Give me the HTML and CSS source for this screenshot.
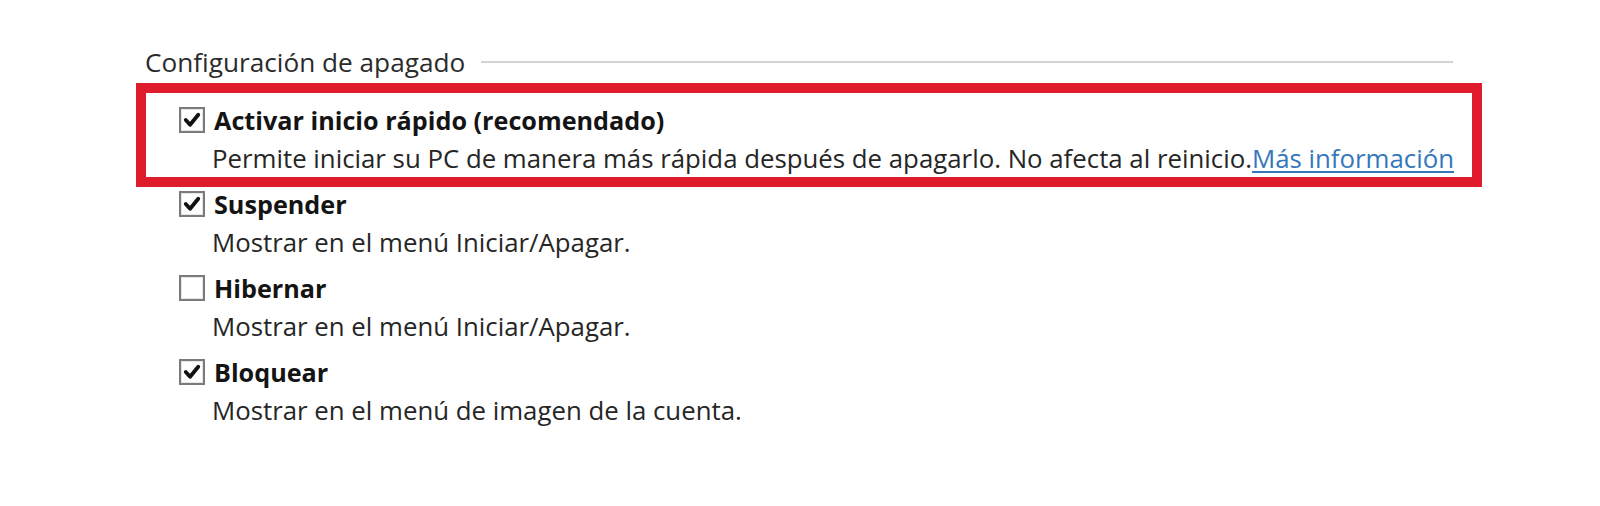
FILE: index.html
```html
<!DOCTYPE html>
<html lang="es">
<head>
<meta charset="utf-8">
<title>Configuración de apagado</title>
<link rel="stylesheet" href="styles.css">
</head>
<body>
<div class="panel">
  <div class="group-head">
    <span class="group-title">Configuración de apagado</span>
    <span class="group-line"></span>
  </div>

  <div class="highlight">
    <div class="option">
      <div class="opt-title">
        <span class="check on"><svg viewBox="0 0 25 25"><path d="M6 12.5 L10.5 17.5 L19 7" /></svg></span>
        <span class="label">Activar inicio rápido (recomendado)</span>
      </div>
      <div class="opt-desc">Permite iniciar su PC de manera más rápida después de apagarlo. No afecta al reinicio.<a class="more" href="#">Más información</a></div>
    </div>
  </div>

  <div class="options">
    <div class="option">
      <div class="opt-title">
        <span class="check on"><svg viewBox="0 0 25 25"><path d="M6 12.5 L10.5 17.5 L19 7" /></svg></span>
        <span class="label">Suspender</span>
      </div>
      <div class="opt-desc">Mostrar en el menú Iniciar/Apagar.</div>
    </div>
    <div class="option">
      <div class="opt-title">
        <span class="check"></span>
        <span class="label">Hibernar</span>
      </div>
      <div class="opt-desc">Mostrar en el menú Iniciar/Apagar.</div>
    </div>
    <div class="option">
      <div class="opt-title">
        <span class="check on"><svg viewBox="0 0 25 25"><path d="M6 12.5 L10.5 17.5 L19 7" /></svg></span>
        <span class="label">Bloquear</span>
      </div>
      <div class="opt-desc">Mostrar en el menú de imagen de la cuenta.</div>
    </div>
  </div>
</div>
</body>
</html>
```

FILE: styles.css
```css
html, body {
  margin: 0;
  padding: 0;
  background: #ffffff;
}

body {
  font-family: "Open Sans", "Noto Sans", "Liberation Sans", sans-serif;
  font-size: 25.8px;
  color: #1f1f1f;
  width: 1600px;
  height: 506px;
  overflow: hidden;
}

.panel {
  padding: 45px 118px 0 136px;
}

.group-head {
  display: flex;
  align-items: center;
  padding-left: 9px;
  padding-right: 29px;
  height: 34px;
}

.group-title {
  color: #2b2b2b;
  font-size: 26.2px;
  line-height: 34px;
  white-space: nowrap;
}

.group-line {
  flex: 1;
  height: 0;
  border-top: 2px solid #d4d4d4;
  margin-left: 16px;
}

.highlight {
  margin-top: 4px;
  border: 10px solid #df1c2c;
  padding: 8px 0 0 33px;
  margin-bottom: -2px;
}

.options {
  padding-left: 43px;
  display: flex;
  flex-direction: column;
  gap: 8px;
}

.opt-title {
  display: flex;
  align-items: center;
  height: 38px;
}

.label {
  font-weight: 700;
  font-size: 25.2px;
  color: #141414;
  margin-left: 9px;
  line-height: 38px;
}

.opt-desc {
  line-height: 38px;
  padding-left: 33px;
  color: #262626;
  white-space: nowrap;
}

.more {
  color: #3577bb;
  text-decoration: underline;
  text-decoration-thickness: 2px;
  text-underline-offset: 3px;
}

.check {
  width: 22px;
  height: 22px;
  border: 2px solid #7a7a7a;
  box-shadow: inset 0 0 0 1px #e6e6e6;
  background: #fff;
  flex: none;
  position: relative;
}

.check svg {
  position: absolute;
  left: -1px;
  top: -1px;
  width: 24px;
  height: 24px;
}

.check svg path {
  fill: none;
  stroke: #111;
  stroke-width: 4;
  stroke-linecap: round;
  stroke-linejoin: round;
}
```
